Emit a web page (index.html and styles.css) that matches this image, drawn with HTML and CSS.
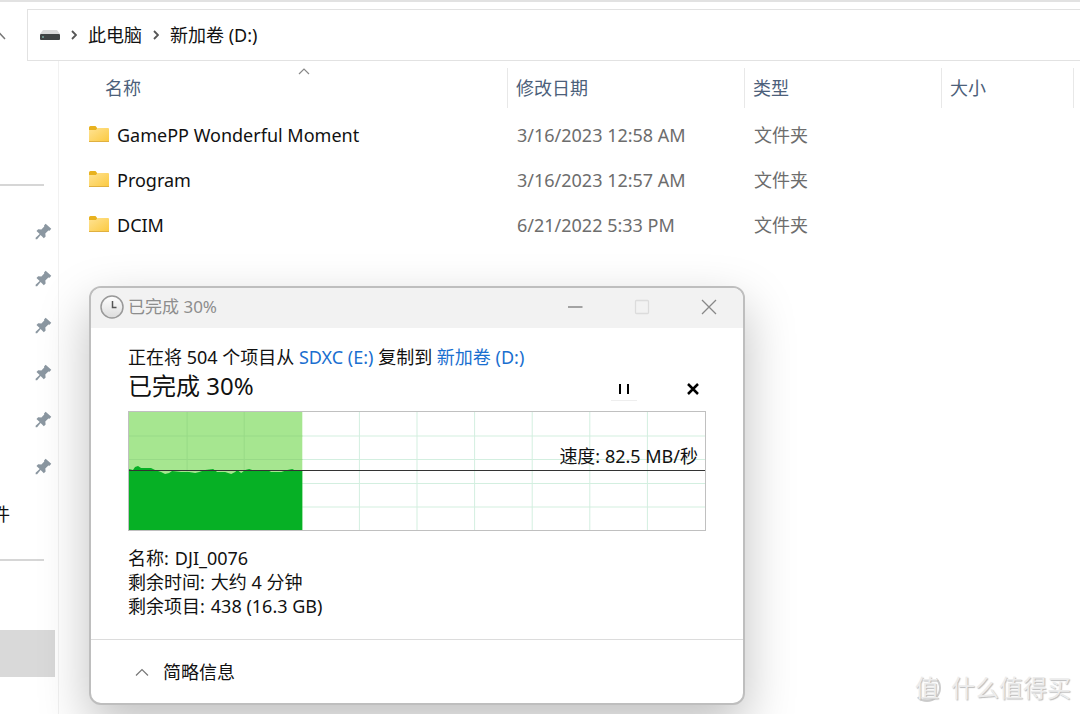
FILE: index.html
```html
<!DOCTYPE html>
<html lang="zh-CN">
<head>
    <meta charset="UTF-8">
    <title>新加卷 (D:)</title>
    <link rel="stylesheet" href="styles.css">
</head>
<body>
    <svg class="defs" width="0" height="0">
        <symbol id="folder" viewBox="0 1 22 18">
            <path d="M1 2.500Q1 1 2.500 1H7.500L9.500 3.500L8 6H1Z" fill="#e8b21f"/>
            <path d="M1 5H8L9.500 3H20Q21 3 21 4V16Q21 17 20 17H2Q1 17 1 16Z" fill="url(#folderFill)"/>
            <path d="M1 16.500H21" stroke="#e0b040" stroke-width="1"/>
        </symbol>
        <symbol id="pin" viewBox="0 0 16 16">
            <path d="M10 .8L15.300 5.500L13.700 7.200L12.600 7L9.700 9.900L10 12.600L8.300 14.300L5.300 11.400L2 15.200H.6V13.900L4.400 10.400L1.400 7.600L3 5.900L6 6.100L8.700 3.400L8.500 2.300Z" fill="#8b97a1"/>
        </symbol>
        <symbol id="crumb" viewBox="0 0 6 10">
            <path d="M1 1L5 5L1 9" fill="none" stroke="#555" stroke-width="1.800"/>
        </symbol>
        <linearGradient id="folderFill" x1="0" y1="0" x2="1" y2="1">
            <stop offset="0" stop-color="#ffe394"/>
            <stop offset="1" stop-color="#fbc93f"/>
        </linearGradient>
    </svg>

    <header class="address-row">
        <button class="up-btn" aria-label="向上">
            <svg width="14" height="9" viewBox="0 0 14 9"><path d="M1 8L7 1.500L13 8" fill="none" stroke="#777" stroke-width="1.500"/></svg>
        </button>
        <nav class="address-bar">
            <svg width="20" height="12" viewBox="0 0 20 12">
                <path d="M3 1H17L20 5H0Z" fill="#d9dada"/>
                <rect y="5" width="20" height="6" rx="1" fill="#3f4444"/>
                <rect x="2" y="7.500" width="2" height="1" fill="#8fd4c8"/>
            </svg>
            <svg width="6" height="10"><use href="#crumb"/></svg>
            <a href="#">此电脑</a>
            <svg width="6" height="10"><use href="#crumb"/></svg>
            <a href="#">新加卷 (D:)</a>
        </nav>
    </header>

    <div class="explorer">
        <aside class="sidebar">
            <ul class="side-list side-top"></ul>
            <ul class="side-list">
                <li><svg width="17" height="17"><use href="#pin"/></svg></li>
                <li><svg width="17" height="17"><use href="#pin"/></svg></li>
                <li><svg width="17" height="17"><use href="#pin"/></svg></li>
                <li><svg width="17" height="17"><use href="#pin"/></svg></li>
                <li><svg width="17" height="17"><use href="#pin"/></svg></li>
                <li><svg width="17" height="17"><use href="#pin"/></svg></li>
                <li><span class="side-text">件</span></li>
            </ul>
            <ul class="side-list">
                <li></li>
                <li class="selected"></li>
            </ul>
        </aside>

        <main class="content">
            <table class="file-table">
                <thead>
                    <tr>
                        <th class="col-name">
                            <span>名称</span>
                            <svg class="sort-mark" width="12" height="7" viewBox="0 0 12 7"><path d="M1 6L6 1L11 6" fill="none" stroke="#888" stroke-width="1.200"/></svg>
                        </th>
                        <th class="col-date"><span>修改日期</span></th>
                        <th class="col-type"><span>类型</span></th>
                        <th class="col-size"><span>大小</span></th>
                        <th class="col-rest"><span></span></th>
                    </tr>
                </thead>
                <tbody>
                    <tr>
                        <td><div class="file-name"><svg width="22" height="18"><use href="#folder"/></svg>GamePP Wonderful Moment</div></td>
                        <td>3/16/2023 12:58 AM</td>
                        <td>文件夹</td>
                        <td></td>
                        <td></td>
                    </tr>
                    <tr>
                        <td><div class="file-name"><svg width="22" height="18"><use href="#folder"/></svg>Program</div></td>
                        <td>3/16/2023 12:57 AM</td>
                        <td>文件夹</td>
                        <td></td>
                        <td></td>
                    </tr>
                    <tr>
                        <td><div class="file-name"><svg width="22" height="18"><use href="#folder"/></svg>DCIM</div></td>
                        <td>6/21/2022 5:33 PM</td>
                        <td>文件夹</td>
                        <td></td>
                        <td></td>
                    </tr>
                </tbody>
            </table>
        </main>
    </div>

    <section class="dialog" role="dialog" aria-labelledby="dialogTitle">
        <div class="title-bar">
            <svg width="24" height="24" viewBox="0 0 24 24">
                <circle cx="12" cy="12" r="11" fill="url(#clockFill)" stroke="#999" stroke-width="1.500"/>
                <path d="M12.500 6V12.500H16.500" fill="none" stroke="#555" stroke-width="1.500"/>
                <linearGradient id="clockFill" x1="0" y1="0" x2="0" y2="1">
                    <stop offset="0" stop-color="#fff"/>
                    <stop offset="1" stop-color="#dcdcdc"/>
                </linearGradient>
            </svg>
            <span class="title-text" id="dialogTitle">已完成 30%</span>
            <button class="win-btn" aria-label="最小化"><svg width="16" height="16" viewBox="0 0 16 16"><path d="M1 8H15.500" stroke="#888" stroke-width="1.300"/></svg></button>
            <button class="win-btn" aria-label="最大化" disabled><svg width="16" height="16" viewBox="0 0 16 16"><rect x="1.500" y="1.500" width="13" height="13" rx="1" fill="none" stroke="#dcdcdc" stroke-width="1.300"/></svg></button>
            <button class="win-btn" aria-label="关闭"><svg width="16" height="16" viewBox="0 0 16 16"><path d="M1 1L15 15M15 1L1 15" stroke="#888" stroke-width="1.300"/></svg></button>
        </div>

        <div class="dialog-body">
            <p class="copy-info">正在将 504 个项目从 <a href="#">SDXC (E:)</a> 复制到 <a href="#">新加卷 (D:)</a></p>
            <div class="progress-row">
                <h1 class="progress-text">已完成 30%</h1>
                <button class="ctrl-btn pause-btn" aria-label="暂停"><svg width="12" height="12" viewBox="0 0 12 12"><path d="M2 1V11M10 1V11" stroke="#000" stroke-width="2"/></svg></button>
                <button class="ctrl-btn" aria-label="取消"><svg width="12" height="12" viewBox="0 0 12 12"><path d="M1 1L11 11M11 1L1 11" stroke="#000" stroke-width="2.500"/></svg></button>
            </div>

            <div class="speed-chart">
                <svg width="100%" height="118" viewBox="0 0 575 118" preserveAspectRatio="none">
                    <path d="M58 0V118M115 0V118M230 0V118M287.500 0V118M345 0V118M402.500 0V118M460 0V118M517.500 0V118M0 24H575M0 47.500H575M0 71.500H575M0 95H575" fill="none" stroke="#d3efe0" stroke-width="1"/>
                    <rect width="173" height="118" fill="#a6e690"/>
                    <path d="M58 0V60M115 0V60M0 24H173M0 47.500H173" fill="none" stroke="#98da87" stroke-width="1"/>
                    <path d="M0 57L4 58L6 55L9 54L12 56H22L26 58L32 60L36 62L40 61L43 59L52 60L60 60L66 61L70 60L76 58L84 57L88 60L96 60L102 62L106 60L108 58L112 61L116 58L120 57L126 59L138 58L142 60H152L158 58L163 57L165 58H173V118H0Z" fill="#06b025"/>
                    <path d="M0 58.500H575" stroke="#333" stroke-width="1"/>
                </svg>
                <span class="speed-label">速度: 82.5 MB/秒</span>
            </div>

            <dl class="details">
                <div><dt>名称:</dt><dd>DJI_0076</dd></div>
                <div><dt>剩余时间:</dt><dd>大约 4 分钟</dd></div>
                <div><dt>剩余项目:</dt><dd>438 (16.3 GB)</dd></div>
            </dl>
        </div>

        <div class="dialog-footer">
            <button class="toggle-btn">
                <svg width="14" height="8" viewBox="0 0 14 8"><path d="M1 7.500L7 1.500L13 7.500" fill="none" stroke="#777" stroke-width="1.200"/></svg>
                简略信息
            </button>
        </div>
    </section>

    <div class="watermark"><span class="watermark-logo">值</span>什么值得买</div>
</body>
</html>
```

FILE: styles.css
```css
* {
    margin: 0;
    padding: 0;
    box-sizing: border-box;
}

body {
    position: relative;
    min-height: 100vh;
    display: flex;
    flex-direction: column;
    overflow: hidden;
    font-family: "Noto Sans", "Noto Sans CJK SC", sans-serif;
    font-size: 18px;
    line-height: 24px;
    color: #111;
    background: #fff;
}

svg {
    display: block;
    flex: none;
}

.defs {
    position: absolute;
}

a {
    color: inherit;
    text-decoration: none;
}

button {
    font: inherit;
    color: inherit;
    background: none;
    border: none;
}

/* 地址栏 */
.address-row {
    display: flex;
    border-top: 2px solid #e2e2e2;
    padding-top: 7px;
}

.up-btn {
    width: 27px;
    display: flex;
    align-items: center;
    justify-content: flex-start;
    overflow: hidden;
}

.up-btn svg {
    margin-left: -8px;
}

.address-bar {
    flex: 1;
    height: 52px;
    display: flex;
    align-items: center;
    gap: 11px;
    padding-left: 12px;
    border: 1px solid #e2e2e2;
    border-right: none;
}

.explorer {
    flex: 1;
    display: flex;
}

/* 侧边栏 */
.sidebar {
    width: 59px;
    border-right: 1px solid #f1f1f1;
}

.side-list {
    list-style: none;
}

.side-list + .side-list {
    margin-top: 22px;
}

.side-list + .side-list::before {
    content: "";
    display: block;
    width: 44px;
    height: 2px;
    margin-bottom: 22px;
    background: #d6d6d6;
}

.side-top {
    height: 101px;
}

.side-list li {
    height: 47px;
    width: 55px;
    padding-left: 35px;
    display: flex;
    align-items: center;
}

.side-list li:has(.side-text) {
    padding-left: 0;
}

.side-text {
    width: 10px;
    display: flex;
    justify-content: flex-end;
    overflow: hidden;
}

.side-list .selected {
    background: #d9d9d9;
}

/* 文件列表 */
.content {
    flex: 1;
    padding-left: 29px;
}

.file-table {
    width: 100%;
    table-layout: fixed;
    border-collapse: collapse;
}

.file-table th {
    position: relative;
    height: 51px;
    padding: 7px 0 4px;
    font-weight: normal;
    text-align: left;
    color: #4c607a;
}

.file-table th span {
    display: flex;
    align-items: center;
    height: 40px;
    padding-left: 8px;
    border-left: 1px solid #e8e8e8;
}

.file-table .col-name span {
    padding-left: 17px;
    border-left: none;
}

.col-name {
    width: 419px;
}

.col-date {
    width: 237px;
}

.col-type {
    width: 197px;
}

.col-size {
    width: 132px;
}

.sort-mark {
    position: absolute;
    top: 7px;
    left: 50%;
}

.file-table td {
    height: 45px;
    padding-left: 10px;
    color: #6d6d6d;
}

.file-table td:first-child {
    padding-left: 0;
    color: #111;
}

.file-name {
    display: flex;
    align-items: center;
    gap: 7px;
}

/* 复制进度窗口 */
.dialog {
    position: absolute;
    top: 286px;
    left: 89px;
    width: 656px;
    border: 2px solid #bebebe;
    border-radius: 12px;
    background: #fff;
    box-shadow: 0 20px 50px rgba(0,0,0,0.25);
    overflow: hidden;
}

.title-bar {
    height: 40px;
    display: flex;
    align-items: center;
    gap: 4px;
    padding: 0 3px 2px 9px;
    background: #f2f2f2;
    color: #8d8d8d;
}

.title-text {
    flex: 1;
    font-size: 17px;
}

.win-btn {
    width: 63px;
    height: 38px;
    display: flex;
    align-items: center;
    justify-content: center;
}

.dialog-body {
    padding: 17px 37px 21px;
}

.copy-info a {
    color: #1a6fd0;
}

.progress-row {
    display: flex;
    align-items: center;
    gap: 43px;
    height: 40px;
    margin-bottom: 2px;
}

.progress-text {
    flex: 1;
    align-self: flex-start;
    font-size: 24px;
    line-height: 34px;
    font-weight: normal;
}

.ctrl-btn {
    width: 26px;
    height: 24px;
    display: flex;
    align-items: center;
    justify-content: center;
}

.pause-btn {
    border-bottom: 1px solid #eee;
}

.speed-chart {
    position: relative;
    border: 1px solid #c0c0c0;
}

.speed-label {
    position: absolute;
    top: 32px;
    right: 7px;
}

.details {
    margin-top: 15px;
}

.details div {
    display: flex;
    gap: 6px;
}

.dialog-footer {
    height: 64px;
    display: flex;
    align-items: center;
    padding-left: 44px;
    border-top: 1px solid #dcdcdc;
}

.toggle-btn {
    display: flex;
    align-items: center;
    gap: 14px;
}

/* 水印 */
.watermark {
    position: absolute;
    right: 9px;
    bottom: 12px;
    display: flex;
    align-items: center;
    gap: 10px;
    font-size: 24px;
    line-height: 28px;
    color: #ececec;
    text-shadow: 1px 1px 1px #bbb;
}

.watermark-logo {
    width: 28px;
    height: 28px;
    border: 2px solid #ccc;
    border-top-color: transparent;
    border-left-color: transparent;
    border-radius: 50%;
    line-height: 24px;
    text-align: center;
    display: flex;
    justify-content: center;
}
```
